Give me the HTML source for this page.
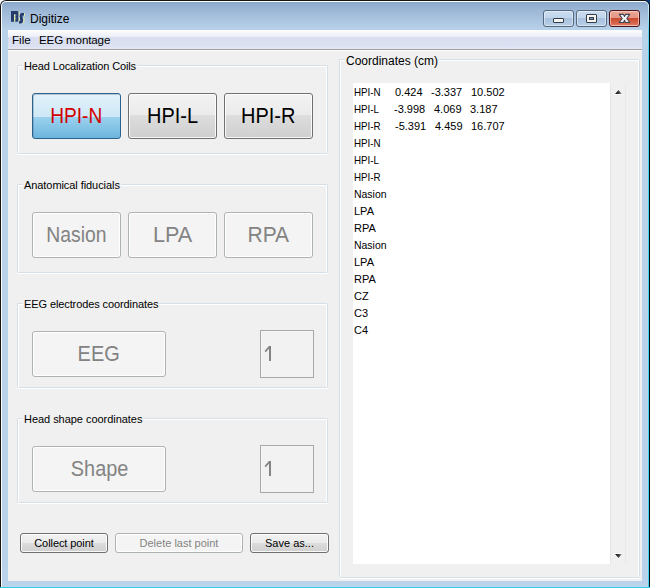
<!DOCTYPE html>
<html><head><meta charset="utf-8">
<style>
*{margin:0;padding:0;box-sizing:border-box}
html,body{width:650px;height:588px;overflow:hidden;background:#fff;font-family:"Liberation Sans",sans-serif}
.a{position:absolute}
#win{left:0;top:0;width:650px;height:600px;border:1px solid #141414;border-right-color:#0a0a0a;border-radius:6px 6px 0 0;
 background:linear-gradient(#8aa7c9 1px,#97b2d2 6px,#a9c3df 18px,#b8d2ea 29px,#bad2ea 100%);overflow:hidden}
#inner{left:0;top:0;width:648px;height:600px;border:1px solid #fff;border-right-color:#c4ecfa;border-bottom:none;border-radius:5px 5px 0 0}
#botline{left:0;top:587px;width:650px;height:1px;background:#2fd0e6}
#menu{left:8px;top:30px;width:634px;height:21px;background:linear-gradient(#fdfdfe 0,#fafbfd 1px,#eef0f8 6px,#eceef7 7px,#d8ddef 7px,#dde2f3 17px,#e4e8f6 18px,#e4e8f6 19px,#9c9c9c 19px,#9c9c9c 20px,#fff 20px)}
#client{left:8px;top:51px;width:634px;height:530px;background:#f0f0f0}
.t{position:absolute;white-space:nowrap;color:#000}
.grp{position:absolute;border:1px solid #d5dfe5;border-radius:1.5px;box-shadow:inset 1px 1px 0 #fff,inset -1px 0 0 #fff,0 1px 0 #fff}
.glab{position:absolute;font-size:11px;letter-spacing:-0.18px;background:#f0f0f0;padding:0 1px 0 1px;line-height:13px;color:#000}
.btn{position:absolute;border:1px solid #707070;border-radius:3px;background:linear-gradient(#f2f2f2 0,#ebebeb 48%,#dddddd 48%,#cfcfcf 100%);box-shadow:inset 0 0 0 1px rgba(255,255,255,0.85);text-align:center;color:#000}
.btn.p{border-color:#2c628b;background:linear-gradient(#e3f2fb 0,#cde8f6 52%,#9cd2ee 52%,#6cb5dd 100%);box-shadow:inset 1px 1px 0 rgba(40,80,110,0.25)}
.btn.d{border-color:#adb2b5;background:#f4f4f4;color:#838383;box-shadow:inset 0 0 0 1px #fff}
.big{font-size:21.5px;line-height:44px}
.big span{display:inline-block}
.sm{font-size:11px;line-height:18px}
.tb{position:absolute;border:1px solid #a6a8ad;background:#f2f2f2;box-shadow:inset 1px 1px 0 #f6f6f6;color:#838383;font-size:21.5px;line-height:46px;padding-left:2px}
.li{position:absolute;font-size:11px;line-height:17px;white-space:nowrap;color:#000}
.cap{position:absolute;top:10px;height:17px;border:1px solid #56687e;border-radius:3px;
 background:linear-gradient(#cadcf0 0,#c0d5eb 7px,#a6c0dd 7px,#b9cfe7 100%);box-shadow:inset 0 0 0 1px rgba(255,255,255,0.45)}
#close{border-color:#4a1219;background:linear-gradient(#eba898 0,#e49583 7px,#c8482c 7px,#d86a50 13px,#e48c78 100%);box-shadow:inset 0 0 0 1px rgba(255,225,215,0.6)}
</style></head><body>
<div class="a" style="left:644px;top:0;width:6px;height:6px;background:#0a3c84"></div>
<div id="win" class="a"><div id="inner" class="a"></div></div>
<div id="botline" class="a"></div>
<div class="a" style="left:648px;top:5px;width:1px;height:583px;background:linear-gradient(#c4ecfa 0,#b8e8f8 8px,#5cd6f4 26px,#44d2f2 60px,#44d2f2 100%)"></div>
<!-- icon -->
<svg class="a" style="left:10px;top:10px" width="16" height="15" viewBox="10 10 16 15">
 <path d="M11 11H17Q18.6 11 18.6 12.6V15Q18.6 16 18 16.3Q18.6 16.8 18.6 17.8V20.2Q18.6 21.8 17 21.8H11Z" fill="#263b6d"/>
 <path d="M14 14.2H15.3V21.8H14Z" fill="#e0e99c"/>
 <path d="M15.3 14.4H16.2V16.2H15.3ZM15.3 17.4H16.2V19.2H15.3Z" fill="#8fa7c9"/>
 <path d="M24 13V15.6H23Q22.3 15.6 22.6 16.8L23 19.6Q23.4 23.6 20.6 23.6H19V21H19.8Q20.4 21 20.2 20L19.8 17Q19.4 13 22 13Z" fill="#263b6d"/>
 <path d="M19.1 11.8V15.6M19.1 17V21.2" stroke="#e0e99c" stroke-width="1" fill="none"/>
 <path d="M24.5 13.2V16.2M23.9 17.2L24.1 20.5Q24.1 23.3 22.3 24" stroke="#e0e99c" stroke-width="1" fill="none"/>
</svg>
<!-- title -->
<div class="t" style="left:30px;top:11px;font-size:12px;line-height:16px;color:#000">Digitize</div>
<!-- caption buttons -->
<div class="cap" style="left:543px;width:31px"></div>
<div class="a" style="left:553px;top:18px;width:11px;height:5px;background:#f4f4f0;border:1px solid #333d4a;border-radius:1px"></div>
<div class="cap" style="left:576px;width:31px"></div>
<div class="a" style="left:586px;top:14px;width:11px;height:9px;background:#f4f4f0;border:1px solid #333d4a;border-radius:1px"></div>
<div class="a" style="left:589px;top:17px;width:5px;height:3px;background:#7f9bbd;border:1px solid #333d4a"></div>
<div id="close" class="cap" style="left:609px;width:31px"></div>
<svg class="a" style="left:615px;top:11px" width="20" height="15" viewBox="615 11 20 15">
 <path d="M619.30 14.40 L623.50 14.40 L624.50 16.55 L625.50 14.40 L629.70 14.40 L626.80 18.45 L629.70 22.50 L625.50 22.50 L624.50 20.35 L623.50 22.50 L619.30 22.50 L622.20 18.45Z" fill="#f6f6f6" stroke="#3e4452" stroke-width="1.1" stroke-linejoin="round"/>
</svg>
<!-- menu -->
<div id="menu" class="a"></div>
<div class="t" style="left:12px;top:32px;font-size:11.6px;line-height:15px">File</div>
<div class="t" style="left:39px;top:32px;font-size:11.6px;line-height:15px;letter-spacing:-0.15px">EEG montage</div>
<div id="client" class="a"></div>

<!-- left groups -->
<div class="grp" style="left:17px;top:65px;width:311px;height:89px"></div>
<div class="glab" style="left:23px;top:60px;letter-spacing:-0.13px">Head Localization Coils</div>
<div class="btn p big" style="left:32px;top:93px;width:89px;height:46px;color:#d20000"><span style="transform:scaleX(0.89)">HPI-N</span></div>
<div class="btn big" style="left:128px;top:93px;width:89px;height:46px"><span style="transform:scaleX(0.928)">HPI-L</span></div>
<div class="btn big" style="left:224px;top:93px;width:89px;height:46px"><span style="transform:scaleX(0.929)">HPI-R</span></div>

<div class="grp" style="left:17px;top:184px;width:311px;height:89px"></div>
<div class="glab" style="left:23px;top:179px;letter-spacing:-0.07px">Anatomical fiducials</div>
<div class="btn d big" style="left:32px;top:212px;width:89px;height:46px"><span style="transform:scaleX(0.9)">Nasion</span></div>
<div class="btn d big" style="left:128px;top:212px;width:89px;height:46px"><span style="transform:scaleX(1.006)">LPA</span></div>
<div class="btn d big" style="left:224px;top:212px;width:89px;height:46px"><span style="transform:scaleX(0.977)">RPA</span></div>

<div class="grp" style="left:17px;top:303px;width:311px;height:85px"></div>
<div class="glab" style="left:23px;top:298px;letter-spacing:-0.1px">EEG electrodes coordinates</div>
<div class="btn d big" style="left:32px;top:331px;width:134px;height:46px"><span style="transform:scaleX(0.93)">EEG</span></div>
<div class="tb" style="left:260px;top:330px;width:54px;height:48px"></div>
<svg class="a" style="left:260px;top:330px" width="54" height="48" viewBox="260 330 54 48"><rect x="269" y="346" width="2" height="15" fill="#838383"/><path d="M265.2 351.6L269.6 346.6" stroke="#838383" stroke-width="1.7"/></svg>

<div class="grp" style="left:17px;top:418px;width:311px;height:85px"></div>
<div class="glab" style="left:23px;top:413px;letter-spacing:-0.04px">Head shape coordinates</div>
<div class="btn d big" style="left:32px;top:446px;width:134px;height:46px"><span style="transform:translateX(0.5px) scaleX(0.926)">Shape</span></div>
<div class="tb" style="left:260px;top:445px;width:54px;height:48px"></div>
<svg class="a" style="left:260px;top:445px" width="54" height="48" viewBox="260 330 54 48"><rect x="269" y="346" width="2" height="15" fill="#838383"/><path d="M265.2 351.6L269.6 346.6" stroke="#838383" stroke-width="1.7"/></svg>

<div class="btn sm" style="left:20px;top:533px;width:88px;height:20px;letter-spacing:-0.08px">Collect point</div>
<div class="btn d sm" style="left:115px;top:533px;width:128px;height:20px">Delete last point</div>
<div class="btn sm" style="left:250px;top:533px;width:79px;height:20px">Save as...</div>

<!-- right group -->
<div class="grp" style="left:339px;top:59px;width:301px;height:519px"></div>
<div class="glab" style="left:345px;top:54px;font-size:12px;line-height:15px;letter-spacing:0">Coordinates (cm)</div>
<div class="a" style="left:353px;top:83px;width:257px;height:481px;background:#fff"></div>
<div class="a" style="left:610px;top:83px;width:16px;height:481px;background:#f0f0f0;border-left:1px solid #e6e6e6;border-right:1px solid #e9e9e9"></div>
<svg class="a" style="left:613px;top:88px" width="11" height="8" viewBox="0 0 11 8"><defs><linearGradient id="ag" x1="0" y1="0" x2="1" y2="0"><stop offset="0" stop-color="#111"/><stop offset="0.45" stop-color="#333"/><stop offset="1" stop-color="#9a9a9a"/></linearGradient></defs><path d="M1.5 6.3L5.5 1.6L9.5 6.3Z" fill="#fff" stroke="#fff" stroke-width="1"/><path d="M2 6L5.5 2L9 6Z" fill="url(#ag)"/></svg>
<svg class="a" style="left:613px;top:552px" width="11" height="8" viewBox="0 0 11 8"><path d="M1.5 1.7L5.5 6.4L9.5 1.7Z" fill="#fff" stroke="#fff" stroke-width="1"/><path d="M2 2L5.5 6L9 2Z" fill="url(#ag)"/></svg>

<div class="li" style="left:354px;top:84px;transform:scaleX(0.89);transform-origin:0 0">HPI-N</div><div class="li" style="left:395px;top:84px">0.424</div><div class="li" style="left:431px;top:84px">-3.337</div><div class="li" style="left:471px;top:84px">10.502</div>
<div class="li" style="left:354px;top:101px;transform:scaleX(0.89);transform-origin:0 0">HPI-L</div><div class="li" style="left:394px;top:101px">-3.998</div><div class="li" style="left:434px;top:101px">4.069</div><div class="li" style="left:470px;top:101px">3.187</div>
<div class="li" style="left:354px;top:118px;transform:scaleX(0.89);transform-origin:0 0">HPI-R</div><div class="li" style="left:395px;top:118px">-5.391</div><div class="li" style="left:435px;top:118px">4.459</div><div class="li" style="left:471px;top:118px">16.707</div>
<div class="li" style="left:354px;top:135px;transform:scaleX(0.89);transform-origin:0 0">HPI-N</div>
<div class="li" style="left:354px;top:152px;transform:scaleX(0.89);transform-origin:0 0">HPI-L</div>
<div class="li" style="left:354px;top:169px;transform:scaleX(0.89);transform-origin:0 0">HPI-R</div>
<div class="li" style="left:354px;top:186px;transform:scaleX(0.95);transform-origin:0 0">Nasion</div>
<div class="li" style="left:354px;top:203px">LPA</div>
<div class="li" style="left:354px;top:220px">RPA</div>
<div class="li" style="left:354px;top:237px;transform:scaleX(0.95);transform-origin:0 0">Nasion</div>
<div class="li" style="left:354px;top:254px">LPA</div>
<div class="li" style="left:354px;top:271px">RPA</div>
<div class="li" style="left:354px;top:288px">CZ</div>
<div class="li" style="left:354px;top:305px">C3</div>
<div class="li" style="left:354px;top:322px">C4</div>

</body></html>
